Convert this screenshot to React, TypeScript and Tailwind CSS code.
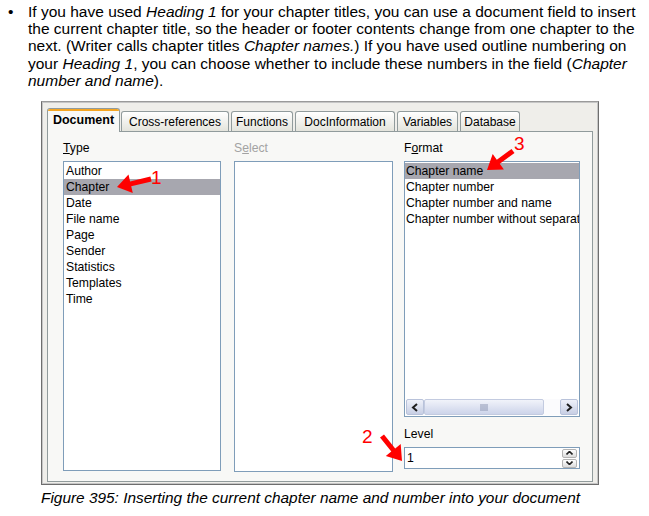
import React from 'react';

const sans = { fontFamily: '"Liberation Sans", Arial, sans-serif' };

function arrow(x1: number, y1: number, x2: number, y2: number, shaft = 5, headLen = 14, headW = 19) {
  const dx = x2 - x1;
  const dy = y2 - y1;
  const len = Math.hypot(dx, dy);
  const ux = dx / len;
  const uy = dy / len;
  const px = -uy;
  const py = ux;
  const bx = x2 - ux * headLen;
  const by = y2 - uy * headLen;
  const pts = [
    [x1 + (px * shaft) / 2, y1 + (py * shaft) / 2],
    [bx + (px * shaft) / 2, by + (py * shaft) / 2],
    [bx + (px * headW) / 2, by + (py * headW) / 2],
    [x2, y2],
    [bx - (px * headW) / 2, by - (py * headW) / 2],
    [bx - (px * shaft) / 2, by - (py * shaft) / 2],
    [x1 - (px * shaft) / 2, y1 - (py * shaft) / 2],
  ];
  return pts.map((p) => p.map((n) => n.toFixed(1)).join(',')).join(' ');
}

const typeItems = ['Author', 'Chapter', 'Date', 'File name', 'Page', 'Sender', 'Statistics', 'Templates', 'Time'];
const formatItems = ['Chapter name', 'Chapter number', 'Chapter number and name', 'Chapter number without separator'];

const tabs = [
  { label: 'Document', w: 'w-[73px]', ml: '' },
  { label: 'Cross-references', w: 'w-[108px]', ml: 'ml-[1px]' },
  { label: 'Functions', w: 'w-[62px]', ml: 'ml-[2px]' },
  { label: 'DocInformation', w: 'w-[100px]', ml: 'ml-[2px]' },
  { label: 'Variables', w: 'w-[61px]', ml: 'ml-[2px]' },
  { label: 'Database', w: 'w-[60px]', ml: 'ml-[2px]' },
];

function Tab({ label, w, ml, active }: { label: string; w: string; ml: string; active?: boolean }) {
  if (active) {
    return (
      <div
        className={`${w} ${ml} relative z-10 -mb-px h-[24px] flex flex-col border border-b-0 border-[#919b9c] rounded-t-[3px] bg-[#f8f8f6]`}
      >
        <div className="h-[2px] bg-[#f5a623] rounded-t-[2px]" />
        <div className="flex-1 flex items-center justify-center text-[12.5px] font-bold text-black pb-[2px]">{label}</div>
      </div>
    );
  }
  return (
    <div
      className={`${w} ${ml} h-[20px] flex items-center justify-center border border-b-0 border-[#919b9c] rounded-t-[3px] bg-gradient-to-b from-white to-[#e4e4dc] text-[12px] text-black`}
    >
      {label}
    </div>
  );
}

function ScrollBtn({ dir }: { dir: 'l' | 'r' }) {
  return (
    <div className="w-[18px] h-full flex items-center justify-center border border-[#b8c2da] rounded-[2px] bg-gradient-to-b from-[#eef1f9] to-[#c8cfe4]">
      <svg width="8" height="9" viewBox="0 0 8 9">
        <path d={dir === 'l' ? 'M6 1 L2 4.5 L6 8' : 'M2 1 L6 4.5 L2 8'} stroke="#1e1e1e" strokeWidth="2" fill="none" />
      </svg>
    </div>
  );
}

export default function App() {
  return (
    <div className="relative w-[649px] h-[516px] bg-white overflow-hidden text-black" style={sans}>
      <div className="flex pt-[3px] text-[15.5px] leading-[17.2px]">
        <div className="w-[28px] pl-[8px]">•</div>
        <p className="whitespace-nowrap">
          If you have used <i>Heading 1</i> for your chapter titles, you can use a document field to insert
          <br />
          the current chapter title, so the header or footer contents change from one chapter to the
          <br />
          next. (Writer calls chapter titles <i>Chapter names.</i>) If you have used outline numbering on
          <br />
          your <i>Heading 1</i>, you can choose whether to include these numbers in the field (<i>Chapter</i>
          <br />
          <i>number and name</i>).
        </p>
      </div>

      <div className="ml-[41px] mt-[12px] w-[558px] h-[384px] border border-[#6e6e6e] border-t-[#9a9a9a] bg-[#efeeea]">
        <div className="h-full border border-[#c6c6c6] px-[4px] pt-[5px] pb-[1px] flex flex-col">
          <div className="flex items-end h-[23px]">
            {tabs.map((t, i) => (
              <Tab key={t.label} {...t} active={i === 0} />
            ))}
          </div>
          <div className="flex-1 border border-[#919b9c] bg-[#f8f8f6] flex pl-[15px] pt-[9px] text-[12.2px]">
            <div className="w-[158px] flex flex-col">
              <div className="h-[14px] leading-[14px] mb-[6px]">
                <u>T</u>ype
              </div>
              <div className="h-[310px] border border-[#7f9db9] bg-white pt-px">
                {typeItems.map((t) => (
                  <div key={t} className={`h-[16px] leading-[16px] pl-[2px] ${t === 'Chapter' ? 'bg-[#a7a7af]' : ''}`}>
                    {t}
                  </div>
                ))}
              </div>
            </div>

            <div className="w-[159px] ml-[13px] flex flex-col">
              <div className="h-[14px] leading-[14px] mb-[6px] text-[#a3a3a3]">
                S<u>e</u>lect
              </div>
              <div className="h-[311px] border border-[#7f9db9] bg-white" />
            </div>

            <div className="w-[176px] ml-[11px] flex flex-col">
              <div className="h-[14px] leading-[14px] mb-[6px]">
                F<u>o</u>rmat
              </div>
              <div className="h-[256px] border border-[#7f9db9] bg-white flex flex-col">
                <div className="flex-1 pt-px overflow-hidden">
                  {formatItems.map((t, i) => (
                    <div
                      key={t}
                      className={`h-[16px] leading-[16px] pl-[1px] whitespace-nowrap ${i === 0 ? 'bg-[#a7a7af]' : ''}`}
                    >
                      {t}
                    </div>
                  ))}
                </div>
                <div className="h-[17px] flex pl-px pr-px pb-px">
                  <ScrollBtn dir="l" />
                  <div className="w-[120px] h-full flex items-center justify-center border border-[#c3cbe0] rounded-[2px] bg-gradient-to-b from-[#f1f3fa] to-[#cdd4ea]">
                    <svg width="8" height="7" viewBox="0 0 8 7">
                      <path d="M1 0V7M3 0V7M5 0V7M7 0V7" stroke="#8e97b3" strokeWidth="1" />
                    </svg>
                  </div>
                  <div className="flex-1 bg-[#fbfbfd]" />
                  <ScrollBtn dir="r" />
                </div>
              </div>
              <div className="mt-[10px] h-[14px] leading-[14px]">Level</div>
              <div className="mt-[6px] h-[22px] border border-[#7f9db9] bg-white flex items-center justify-between pl-[2px] pr-[2px]">
                <span>1</span>
                <div className="flex flex-col gap-px">
                  <div className="w-[15px] h-[9px] flex items-center justify-center border border-[#b3b3b3] rounded-[2px] bg-gradient-to-b from-white to-[#dcdcdc]">
                    <svg width="7" height="4" viewBox="0 0 7 4">
                      <path d="M0.5 3.5 L3.5 0.5 L6.5 3.5" stroke="#222" strokeWidth="1.6" fill="none" />
                    </svg>
                  </div>
                  <div className="w-[15px] h-[9px] flex items-center justify-center border border-[#b3b3b3] rounded-[2px] bg-gradient-to-b from-white to-[#dcdcdc]">
                    <svg width="7" height="4" viewBox="0 0 7 4">
                      <path d="M0.5 0.5 L3.5 3.5 L6.5 0.5" stroke="#222" strokeWidth="1.6" fill="none" />
                    </svg>
                  </div>
                </div>
              </div>
            </div>
          </div>
        </div>
      </div>

      <div className="ml-[41px] mt-[4px] text-[15.4px] leading-[17px] italic whitespace-nowrap">
        Figure 395: Inserting the current chapter name and number into your document
      </div>

      <svg className="absolute left-0 top-0 pointer-events-none" width="649" height="516">
        <polygon points={arrow(151, 179, 117, 187)} fill="#ff0000" />
        <polygon points={arrow(513, 151, 487, 170)} fill="#ff0000" />
        <polygon points={arrow(382, 436, 402, 461)} fill="#ff0000" />
      </svg>
      <span className="absolute left-[151px] top-[167px] text-[19px] leading-[22px] text-[#ff0000]">1</span>
      <span className="absolute left-[514px] top-[133px] text-[19px] leading-[22px] text-[#ff0000]">3</span>
      <span className="absolute left-[362px] top-[426px] text-[19px] leading-[22px] text-[#ff0000]">2</span>
    </div>
  );
}
